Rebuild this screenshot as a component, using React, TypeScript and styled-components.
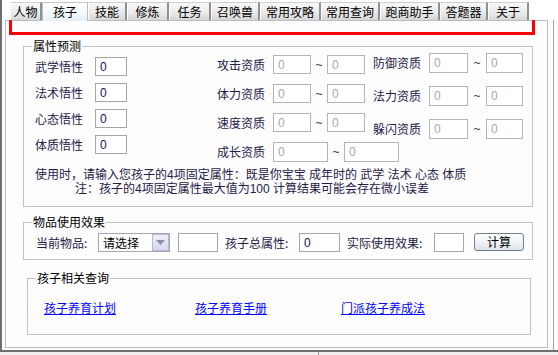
import React from 'react';
import { styled, createGlobalStyle } from 'styled-components';

const GlobalStyle = createGlobalStyle`
  html, body {
    margin: 0;
    padding: 0;
    background: #ffffff;
  }
  body {
    font-family: 'Noto Sans CJK SC', 'Liberation Sans', sans-serif;
    font-size: 12px;
  }
`;

const Frame = styled.div`
  position: relative;
  width: 558px;
  height: 355px;
  overflow: hidden;
  background: #fbfbfb;
  display: flex;
  flex-direction: column;
`;

const Window = styled.div`
  display: flex;
  flex-direction: column;
  height: 350px;
  border-left: 2px solid #6e6e6e;
`;

const TabStrip = styled.div`
  position: relative;
  z-index: 1;
  height: 20px;
  padding-left: 8px;
  display: flex;
  align-items: flex-end;
  background: #ffffff;
`;

const Tab = styled.div<{ $w: number; $active?: boolean }>`
  box-sizing: border-box;
  width: ${(p) => p.$w}px;
  height: ${(p) => (p.$active ? 19 : 18)}px;
  margin-bottom: ${(p) => (p.$active ? -1 : 0)}px;
  display: flex;
  align-items: center;
  justify-content: center;
  font-size: 12px;
  line-height: 14px;
  color: #000000;
  border-top: 1px solid ${(p) => (p.$active ? '#c4c8cc' : '#d0d0d0')};
  border-left: 1px solid ${(p) => (p.$active ? '#b8bcc4' : '#ffffff')};
  border-right: ${(p) => (p.$active ? '1px solid #b8bcc4' : '2px solid #909090')};
  background: ${(p) =>
    p.$active
      ? 'linear-gradient(#ffffff 0%, #f4f9fd 50%, #e6f1fa 100%)'
      : 'linear-gradient(#f8f8f8 0%, #ebebeb 55%, #d6d6d6 100%)'};
`;

const Body = styled.div`
  display: flex;
  height: 330px;
  width: 552px;
  box-sizing: border-box;
  padding: 0 5px 0 3px;
  border-right: 1px solid #a4a4a4;
`;

const TabPanel = styled.div`
  box-sizing: border-box;
  width: 543px;
  height: 328px;
  border: 1px solid #b9bdc6;
  background: #fdfdfd;
  padding: 18px 0 0 17px;
  display: flex;
  flex-direction: column;
`;

const Group = styled.fieldset<{ $w: number; $h: number; $mt?: number; $ml?: number }>`
  box-sizing: border-box;
  width: ${(p) => p.$w}px;
  height: ${(p) => p.$h}px;
  margin: ${(p) => p.$mt ?? 0}px 0 0 ${(p) => p.$ml ?? 0}px;
  padding: 0;
  min-width: 0;
  border: 1px solid #bfc3cb;
`;

const Legend = styled.legend`
  margin-left: 8px;
  padding: 0 1px;
  font-size: 12px;
  line-height: 14px;
  color: #000000;
`;

const Columns = styled.div`
  display: flex;
  padding-left: 11px;
`;

const Column = styled.div<{ $w?: number; $mt: number; $gap: number }>`
  display: flex;
  flex-direction: column;
  width: ${(p) => (p.$w ? `${p.$w}px` : 'auto')};
  margin-top: ${(p) => p.$mt}px;
  gap: ${(p) => p.$gap}px;
`;

const Row = styled.div<{ $h: number }>`
  display: flex;
  align-items: center;
  height: ${(p) => p.$h}px;
`;

const Label = styled.span<{ $w?: number }>`
  flex: none;
  width: ${(p) => (p.$w ? `${p.$w}px` : 'auto')};
  font-size: 12px;
  line-height: 14px;
  color: #1f2048;
  white-space: nowrap;
`;

const Field = styled.input<{ $w: number; $h?: number; $muted?: boolean }>`
  flex: none;
  box-sizing: border-box;
  width: ${(p) => p.$w}px;
  height: ${(p) => p.$h ?? 19}px;
  margin: 0;
  padding: 0 0 0 4px;
  border: 1px solid ${(p) => (p.$muted ? '#b4b4b4' : '#a6a6a6')};
  background: #ffffff;
  font-family: 'Liberation Sans', 'Noto Sans CJK SC', sans-serif;
  font-size: 12px;
  color: ${(p) => (p.$muted ? '#a8a8a8' : '#141450')};
  outline: none;
`;

const Tilde = styled.span<{ $w: number }>`
  flex: none;
  width: ${(p) => p.$w}px;
  text-align: center;
  font-family: 'Liberation Sans', sans-serif;
  font-size: 12px;
  color: #3a3a50;
`;

const Notes = styled.div`
  margin-top: 6px;
  padding-left: 11px;
  font-family: 'Liberation Sans', 'Noto Sans CJK SC', sans-serif;
  font-size: 12px;
  line-height: 14px;
  color: #1f2048;
  white-space: nowrap;
`;

const NoteLine = styled.div<{ $indent?: number }>`
  padding-left: ${(p) => p.$indent ?? 0}px;
`;

const ItemRow = styled.div`
  display: flex;
  align-items: center;
  margin-top: 4px;
  padding-left: 12px;
`;

const Select = styled.div`
  flex: none;
  box-sizing: border-box;
  width: 72px;
  height: 19px;
  margin-right: 8px;
  border: 1px solid #a5a7b8;
  background: #ffffff;
  display: flex;
  align-items: center;
  justify-content: space-between;
  padding-left: 4px;
  font-size: 12px;
  color: #000000;
`;

const SelectArrow = styled.div`
  box-sizing: border-box;
  width: 17px;
  height: 17px;
  border: 1px solid #b6b8d8;
  background: linear-gradient(#eeeefa, #d6d8ee);
  display: flex;
  align-items: center;
  justify-content: center;
`;

const Spacer = styled.span<{ $w: number }>`
  flex: none;
  width: ${(p) => p.$w}px;
`;

const CalcButton = styled.button`
  box-sizing: border-box;
  width: 50px;
  height: 18px;
  margin: 0 0 1px 10px;
  padding: 0;
  border: 1px solid #70808f;
  border-radius: 3px;
  background: linear-gradient(#ffffff 0%, #f0f2f5 50%, #dde2e8 100%);
  font-family: 'Noto Sans CJK SC', sans-serif;
  font-size: 12px;
  line-height: 14px;
  color: #000000;
`;

const Links = styled.div`
  display: grid;
  grid-template-columns: 151px 146px auto;
  padding: 16px 0 0 16px;
`;

const Link = styled.a`
  justify-self: start;
  font-size: 12px;
  line-height: 14px;
  color: #0000ff;
  text-decoration: underline;
  cursor: pointer;
`;

const StatusBar = styled.div`
  flex: 1;
  display: flex;
  border-top: 2px solid #6e6e6e;
  background: #f3eded;
`;

const StatusCell = styled.div<{ $w: number }>`
  width: ${(p) => p.$w}px;
  border-right: 1px solid #9a9a9a;
`;

const Highlight = styled.div`
  position: absolute;
  left: 9px;
  top: 0;
  width: 526px;
  height: 35px;
  box-sizing: border-box;
  border: 3px solid #ff0000;
  pointer-events: none;
`;

const tabs = [
  { label: '人物', w: 32 },
  { label: '孩子', w: 46, active: true },
  { label: '技能', w: 39 },
  { label: '修炼', w: 42 },
  { label: '任务', w: 42 },
  { label: '召唤兽', w: 49 },
  { label: '常用攻略', w: 61 },
  { label: '常用查询', w: 59 },
  { label: '跑商助手', w: 60 },
  { label: '答题器', w: 48 },
  { label: '关于', w: 41 },
];

const wuxing = ['武学悟性', '法术悟性', '心态悟性', '体质悟性'];
const midZizhi = ['攻击资质', '体力资质', '速度资质'];
const rightZizhi = ['防御资质', '法力资质', '躲闪资质'];

export default function App() {
  return (
    <>
      <GlobalStyle />
      <Frame>
        <Window>
          <TabStrip>
            {tabs.map((t) => (
              <Tab key={t.label} $w={t.w} $active={t.active}>
                {t.label}
              </Tab>
            ))}
          </TabStrip>
          <Body>
            <TabPanel>
              <Group $w={510} $h={168}>
                <Legend>属性预测</Legend>
                <Columns>
                  <Column $w={182} $mt={4} $gap={7}>
                    {wuxing.map((name) => (
                      <Row key={name} $h={19}>
                        <Label $w={60}>{name}</Label>
                        <Field $w={32} readOnly value="0" />
                      </Row>
                    ))}
                  </Column>
                  <Column $w={156} $mt={2} $gap={10}>
                    {midZizhi.map((name) => (
                      <Row key={name} $h={19}>
                        <Label $w={56}>{name}</Label>
                        <Field $w={38} $muted readOnly value="0" />
                        <Tilde $w={16}>~</Tilde>
                        <Field $w={38} $muted readOnly value="0" />
                      </Row>
                    ))}
                    <Row $h={20}>
                      <Label $w={56}>成长资质</Label>
                      <Field $w={55} $h={20} $muted readOnly value="0" />
                      <Tilde $w={16}>~</Tilde>
                      <Field $w={55} $h={20} $muted readOnly value="0" />
                    </Row>
                  </Column>
                  <Column $mt={0} $gap={13}>
                    {rightZizhi.map((name) => (
                      <Row key={name} $h={20}>
                        <Label $w={56}>{name}</Label>
                        <Field $w={39} $h={20} $muted readOnly value="0" />
                        <Tilde $w={18}>~</Tilde>
                        <Field $w={37} $h={20} $muted readOnly value="0" />
                      </Row>
                    ))}
                  </Column>
                </Columns>
                <Notes>
                  <NoteLine>使用时，请输入您孩子的4项固定属性：既是你宝宝 成年时的 武学 法术 心态 体质</NoteLine>
                  <NoteLine $indent={40}>注：孩子的4项固定属性最大值为100 计算结果可能会存在微小误差</NoteLine>
                </Notes>
              </Group>

              <Group $w={510} $h={45} $mt={8}>
                <Legend>物品使用效果</Legend>
                <ItemRow>
                  <Label $w={62}>当前物品:</Label>
                  <Select>
                    请选择
                    <SelectArrow>
                      <svg width="9" height="5" viewBox="0 0 9 5">
                        <path d="M0 0 H9 L4.5 5 Z" fill="#8a8caa" />
                      </svg>
                    </SelectArrow>
                  </Select>
                  <Field $w={40} $h={19} readOnly value="" />
                  <Spacer $w={7} />
                  <Label $w={74}>孩子总属性:</Label>
                  <Field $w={41} $h={19} readOnly value="0" />
                  <Spacer $w={7} />
                  <Label $w={87}>实际使用效果:</Label>
                  <Field $w={30} $h={19} readOnly value="" />
                  <CalcButton>计算</CalcButton>
                </ItemRow>
              </Group>

              <Group $w={504} $h={64} $mt={11} $ml={4}>
                <Legend>孩子相关查询</Legend>
                <Links>
                  <Link>孩子养育计划</Link>
                  <Link>孩子养育手册</Link>
                  <Link>门派孩子养成法</Link>
                </Links>
              </Group>
            </TabPanel>
          </Body>
        </Window>
        <StatusBar>
          <StatusCell $w={318} />
        </StatusBar>
        <Highlight />
      </Frame>
    </>
  );
}
